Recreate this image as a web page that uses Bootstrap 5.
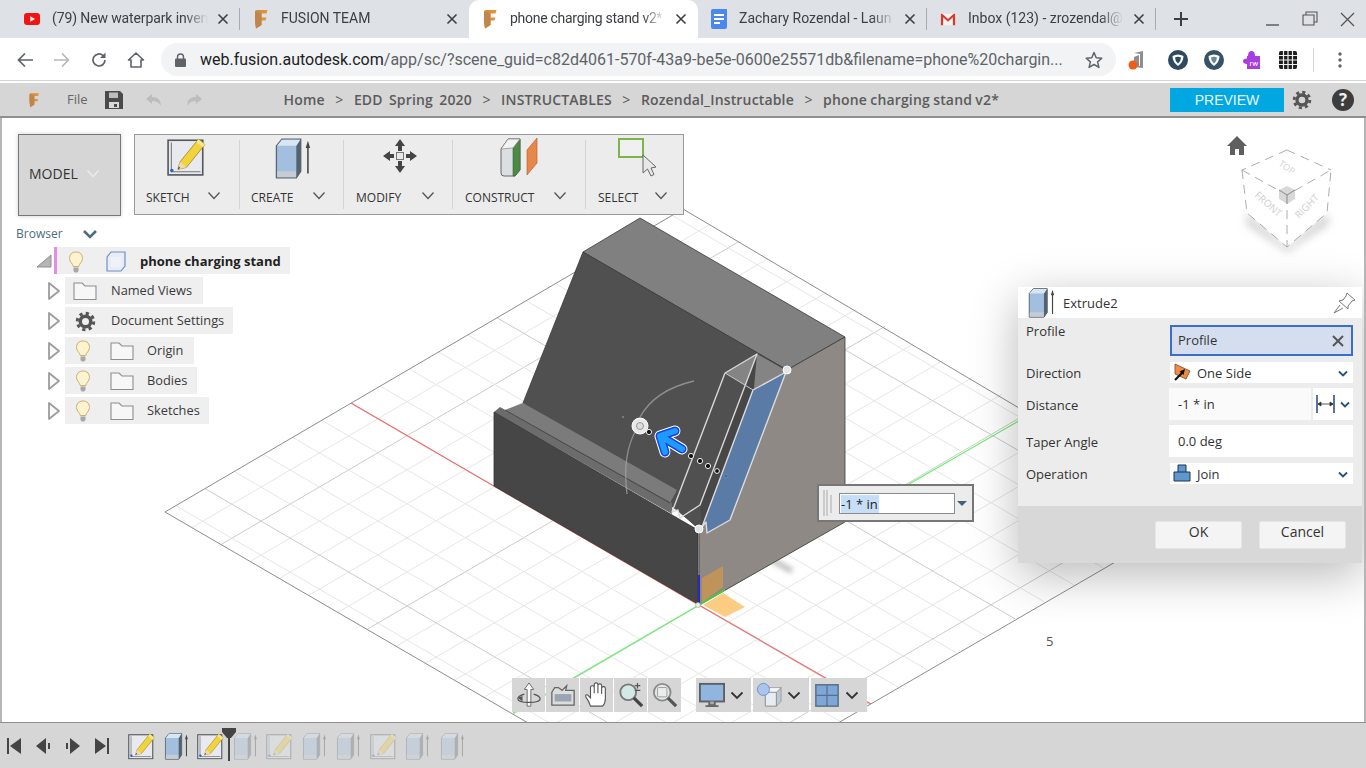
<!DOCTYPE html>
<html lang="en">
<head>
<meta charset="utf-8">
<title>phone charging stand v2*</title>
<link href="https://cdn.jsdelivr.net/npm/bootstrap@5.3.0/dist/css/bootstrap.min.css" rel="stylesheet">
<style>
html,body{height:768px;overflow:hidden;background:#fff}
body{font-family:"Open Sans","Liberation Sans",sans-serif;font-size:13px;color:#3c3c3c;width:1366px}
.chrome-font{font-family:Roboto,"Liberation Sans",sans-serif}
.tabstrip{height:38px;background:#dee1e6;padding-left:11px;font-size:14px;color:#3c4043}
.tabitem{width:229px;height:38px;padding:0 11px 1px 13px;position:relative}
.tabitem.is-active{background:#fff;border-radius:10px 10px 0 0}
.tabitem.has-sep::after{content:"";position:absolute;right:0;top:8px;height:22px;width:1px;background:#a8abb0}
.tabicon{width:16px;height:16px;flex:none;margin-right:12px}
.tabicon.favmark{height:20px}
.tabtext{flex:1 1 0;white-space:nowrap;overflow:hidden;-webkit-mask-image:linear-gradient(90deg,#000 85%,transparent);mask-image:linear-gradient(90deg,#000 85%,transparent)}
.tighttext{letter-spacing:-.28px}
.tightless{letter-spacing:-.12px}
.tabx{width:12px;height:12px;flex:none;margin-left:9px}
.winbtns{margin-left:auto}
.addrbar{height:43px;background:#fff;border-bottom:1px solid #d4d4d4;padding:1px 0 0 16px}
.navico{width:18px;height:18px;flex:none;margin-right:19px}
.omnibox{width:955px;height:33px;background:#f1f3f4;border-radius:17px;padding:0 13px 0 14px;margin-left:-3px;font-size:16px;color:#5f6368;white-space:nowrap}
.omnibox b{font-weight:400;color:#202124}
.urltext{flex:1 1 0;overflow:hidden;margin-left:14px}
.extico{width:20px;height:20px;flex:none}
.appbar{height:35px;margin-top:2px;background:#d6d6d6;border-bottom:2px solid #8f8f8f;padding-left:28px;color:#5c5c5c;position:relative}
.crumbs{font-weight:600;font-size:14px;color:#5b5b5b;margin-left:81px;white-space:nowrap;letter-spacing:.16px;word-spacing:-.5px}
.crumbs span{margin:0 10.5px;font-weight:400}
.crumbs .widewords{margin:0;font-weight:600;word-spacing:2.500px}
.previewbtn{width:114px;height:24px;border-radius:0;border:0;background:#00a7e1;color:#e8f6fc;font-size:14px;padding:0;line-height:24px;margin-left:auto;margin-top:1px;font-family:"Liberation Sans",sans-serif}
.canvasarea{position:relative;width:1366px;height:604px;border-left:2px solid #b5b5b5;border-right:2px solid #b5b5b5;overflow:hidden;background:#fff}
.scene{position:absolute;left:-2px;top:0;width:1366px;height:604px}
.modelbtn{position:absolute;left:16px;top:16px;width:103px;height:82px;background:#d6d6d6;border:1px solid #777;box-shadow:0 0 4px rgba(0,0,0,.2);font-size:14px;color:#333;padding:0 0 4px 10px}
.toolbarbox{position:absolute;left:132px;top:16px;height:81px;background:#ececec;border:1px solid #9a9a9a;color:#333;font-size:12px}
.toolitem{height:79px;padding:2px 0 0 11px;position:relative}
.toolitem+.toolitem::before{content:"";position:absolute;left:-1px;top:5px;bottom:5px;width:1px;background:#d4d4d4}
.toolicon{height:42px;width:42px;display:block}
.toollabel{margin-top:14px;line-height:16px;white-space:nowrap}
.chev-sm{width:14px;height:9px;position:absolute;top:56px}
.browserhead{position:absolute;left:14px;top:107px;font-size:12px;color:#4d6c82}
.treebox{position:absolute;left:-2px;top:129px;gap:3px;font-size:12.8px}
.treerow{height:27px}
.treeslot{width:65px;flex:none;padding-left:47px}
.treeslot.rootslot{width:54px;padding-left:36px}
.treepill{height:27px;background:#efefef;color:#3a3a3a;white-space:nowrap;padding-top:1px}
.rootpill{border-left:3px solid #e18fe0;font-weight:700;color:#222;width:236px;padding-left:9px;padding-top:2px}
.tico{width:20px;height:24px;flex:none}
.fico{width:24px;height:20px;flex:none}
.dialogbox{position:absolute;left:1016px;top:169px;width:344px;background:#ececec;box-shadow:0 12px 44px rgba(0,0,0,.28);font-size:13px;color:#333}
.dlghead{height:31px;background:#fff;padding:2px 0 0 9px}
.dlgbody{height:188px;position:relative}
.dlgrow{position:absolute;left:8px;width:327px}
.dlglabel{width:144px;flex:none}
.dlglabel.lower1{padding-top:2px}
.dlglabel.lower2{padding-top:4px;height:32px;width:143px}
.fieldbox{background:#fff;height:21px;padding:2px 5px 0 3px}
.inputbox{height:32px;padding:2px 0 0 9px}
.selchev{width:10px;height:7px;margin-left:auto}
.dlgfoot{height:57px;background:#d8d8d8;padding:15px 16px 0 137px;gap:17px}
.dlgbtn{width:87px;height:28px;padding:0 0 6px;border:1px solid #e6e6e6;border-radius:2px;background:#f4f4f4;font-size:14px;color:#333;line-height:20px}
.floatinput{position:absolute;left:815px;top:366px;width:157px;height:38px;background:#ececec;border:2px solid #777;padding:0 0 0 20px}
.floatfield{width:116px;height:21px;border:1px solid #8b8b8b;background:#fff;padding-left:1px;font-size:13px;line-height:20px;color:#222}
.floatfield span{background:#c6def6;padding-right:1px}
.navstrip{position:absolute;left:510px;top:560px;height:34px;gap:1px}
.navcell{height:34px;background:#d6d6d6;width:33px}
.navcell.wide{width:56px;padding-left:3px;margin-left:1px}
.navcell.spacer{margin-left:14px;width:55px}
.navcell svg.big{width:26px;height:26px;flex:none}
.chevdark{width:14px;height:9px;margin-left:5px;flex:none}
.scale5{position:absolute;left:1044px;top:514px;font-size:13px;color:#555}
.timeline{height:46px;background:#d6d6d6;border-top:1px solid #8f8f8f;padding-left:7px;position:relative}
.tlctrl{width:15px;height:18px;flex:none;margin-right:14px}
.tlitem{width:27px;height:28px;flex:none;margin-right:7.5px}
.tlghost{opacity:.32}
.tlmarker{position:absolute;left:222px;top:5px;width:14px;height:33px}
.first-tl{margin-left:5px}
</style>
</head>
<body class="d-flex flex-column">
<svg width="0" height="0" class="position-absolute">
<defs>
<linearGradient id="fg" x1="0" y1="0" x2="1" y2="0"><stop offset="0" stop-color="#c98a4a"/><stop offset="1" stop-color="#ea9438"/></linearGradient>
<symbol id="fav" viewBox="0 0 16 20"><path d="M2 2.500Q2 1 4 1H14.500L13.500 4.500H8.500V8.500H13.500L12.500 11.500H8.500V16L3 19.500Q2 14 2 10Z" fill="url(#fg)"/><path d="M2 2.500L8.500 4.500V16L3 19.500Q2 14 2 10Z" fill="#c08548"/></symbol>
<symbol id="x" viewBox="0 0 12 12"><path d="M1.500 1.500L10.500 10.500M10.500 1.500L1.500 10.500" stroke="#3c4043" stroke-width="1.600" fill="none"/></symbol>
<symbol id="chev" viewBox="0 0 14 9"><path d="M1.500 1.500L7 7.500L12.500 1.500" fill="none" stroke="#555" stroke-width="1.300"/></symbol>
<symbol id="chevb" viewBox="0 0 14 9"><path d="M1.500 1.500L7 7L12.500 1.500" fill="none" stroke="#333" stroke-width="1.800"/></symbol>
<symbol id="chevblue" viewBox="0 0 10 7"><path d="M1 1.500L5 5.500L9 1.500" fill="none" stroke="#24527e" stroke-width="1.800"/></symbol>
<symbol id="extrude" viewBox="0 0 34 38">
<path d="M2 8L7 2H24V31L20 37H2Z" fill="#a2bfe0" stroke="#5b6672" stroke-width="1.200"/>
<path d="M2.600 31H20V36.500H2.600Z" fill="#c6ccd3"/><path d="M20 8L24 2V31L20 37Z" fill="#55616d"/><path d="M2.600 8L7 2.500H23.500L20 8Z" fill="#d8e5f3"/>
<path d="M30.500 9V33" stroke="#444" stroke-width="1.400"/><path d="M30.500 3.500L28.500 10H32.500Z" fill="#444"/></symbol>
<symbol id="sketch" viewBox="0 0 36 36">
<rect x="1" y="3" width="32" height="32" fill="#e8eaef" stroke="#55595e" stroke-width="1.500"/>
<path d="M4 5V32H31" fill="none" stroke="#777" stroke-width="1"/><circle cx="4.500" cy="31" r="1.600" fill="#2a62d8"/>
<path d="M12 23L29 2L35 7L18 28L10 30Z" fill="#f3d33c" stroke="#9c8a2a" stroke-width=".8"/><path d="M12 23L18 28L10 30Z" fill="#ecd9b4"/><path d="M10 30L12 28.500L11 27Z" fill="#333"/><path d="M29 2L35 7L33 9.500L27 4.500Z" fill="#f7e88c"/></symbol>
<symbol id="bulb" viewBox="0 0 20 24"><path d="M10 2C5.500 2 3.500 5 3.500 8.500C3.500 12 6.800 13.500 7.300 16.500H12.700C13.200 13.500 16.500 12 16.500 8.500C16.500 5 14.500 2 10 2Z" fill="#fdf3cf" stroke="#d1ac70" stroke-width="1"/><path d="M7.500 17.500H12.500V21L11.200 22.500H8.800L7.500 21Z" fill="#a8a8a8"/></symbol>
<symbol id="folder" viewBox="0 0 24 20"><path d="M1 18.500V2H9L12 5H23V18.500Z" fill="#f7f7f7" stroke="#8e8e8e" stroke-width="1.100"/></symbol>
<symbol id="gear" viewBox="0 0 24 24"><circle cx="12" cy="12" r="6" fill="none" stroke="#555" stroke-width="4"/><circle cx="12" cy="12" r="9.400" fill="none" stroke="#555" stroke-width="3.400" stroke-dasharray="3.700 3.680"/></symbol>
<symbol id="tri" viewBox="0 0 14 20"><path d="M2 2L12 10L2 18Z" fill="#fafafa" stroke="#9c9c9c" stroke-width="1.800" stroke-linejoin="round"/></symbol>
</defs>
</svg>

<!-- browser tabs -->
<div class="tabstrip chrome-font d-flex flex-shrink-0">
  <div class="tabitem has-sep d-flex align-items-center">
    <svg class="tabicon" viewBox="0 0 16 16"><rect y="2" width="16" height="12" rx="3" fill="#f01414"/><path d="M6.300 5.300V10.700L11 8Z" fill="#fff"/></svg>
    <span class="tabtext tightless">(79) New waterpark inven</span><svg class="tabx"><use href="#x"/></svg></div>
  <div class="tabitem d-flex align-items-center">
    <svg class="tabicon favmark" viewBox="0 0 16 20"><use href="#fav"/></svg>
    <span class="tabtext">FUSION TEAM</span><svg class="tabx"><use href="#x"/></svg></div>
  <div class="tabitem is-active d-flex align-items-center">
    <svg class="tabicon favmark" viewBox="0 0 16 20"><use href="#fav"/></svg>
    <span class="tabtext tighttext">phone charging stand v2*</span><svg class="tabx"><use href="#x"/></svg></div>
  <div class="tabitem has-sep d-flex align-items-center">
    <svg class="tabicon favmark" viewBox="0 0 16 20"><path d="M0 2Q0 0 2 0H16V18Q16 20 14 20H2Q0 20 0 18Z" fill="#4a87ee"/><path d="M3 6H13M3 10H13M3 14H9" stroke="#fff" stroke-width="1.800"/></svg>
    <span class="tabtext">Zachary Rozendal - Laun</span><svg class="tabx"><use href="#x"/></svg></div>
  <div class="tabitem has-sep d-flex align-items-center">
    <svg class="tabicon" viewBox="0 0 18 16"><rect x="1" y="2" width="16" height="13" fill="#f2f2f2"/><path d="M1 15V2H2.500L9 8L15.500 2H17V15H14.500V6L9 11L3.500 6V15Z" fill="#d9382c"/></svg>
    <span class="tabtext">Inbox (123) - zrozendal@</span><svg class="tabx"><use href="#x"/></svg></div>
  <svg class="ms-3 align-self-center" width="18" height="18" viewBox="0 0 18 18"><path d="M9 2V16M2 9H16" stroke="#3c4043" stroke-width="2"/></svg>
  <svg class="winbtns align-self-center" width="92" height="18" viewBox="0 0 92 18"><path d="M0 15H13" stroke="#555" stroke-width="1.400"/><path d="M37 5H48V15H37Z M40 5V2H51V12H48" fill="none" stroke="#555" stroke-width="1.100"/><path d="M75 3L88 16M88 3L75 16" stroke="#555" stroke-width="1.300"/></svg><div style="width:8px"></div>
</div>

<!-- address bar -->
<div class="addrbar chrome-font d-flex align-items-center flex-shrink-0">
  <svg class="navico" viewBox="0 0 18 18"><path d="M17 9H3M9 2.500L2.500 9L9 15.500" fill="none" stroke="#5f6368" stroke-width="1.700"/></svg>
  <svg class="navico" viewBox="0 0 18 18"><path d="M1 9H15M9 2.500L15.500 9L9 15.500" fill="none" stroke="#b6b8bb" stroke-width="1.700"/></svg>
  <svg class="navico" viewBox="0 0 18 18"><path d="M15 9A6 6 0 1 1 13 4.500" fill="none" stroke="#5f6368" stroke-width="1.700"/><path d="M15.500 1.500V7H10Z" fill="#5f6368"/></svg>
  <svg class="navico" viewBox="0 0 18 18"><path d="M9 2L1.500 9H4V16H14V9H16.500Z" fill="none" stroke="#5f6368" stroke-width="1.600" stroke-linejoin="round"/></svg>
  <div class="omnibox d-flex align-items-center">
    <svg width="11" height="14" viewBox="0 0 11 14" class="flex-shrink-0"><path d="M2.500 6V4A3 3 0 0 1 8.500 4V6" fill="none" stroke="#5f6368" stroke-width="1.400"/><rect y="5.500" width="11" height="8.500" rx="1" fill="#5f6368"/></svg>
    <span class="urltext"><b>web.fusion.autodesk.com</b>/app/sc/?scene_guid=c82d4061-570f-43a9-be5e-0600e25571db&amp;filename=phone%20chargin...</span>
    <svg width="18" height="18" viewBox="0 0 18 18" class="ms-2 flex-shrink-0"><path d="M9 1.500L11.200 6.700L16.800 7.200L12.600 10.900L13.900 16.400L9 13.500L4.100 16.400L5.400 10.900L1.200 7.200L6.800 6.700Z" fill="none" stroke="#5f6368" stroke-width="1.500" stroke-linejoin="round"/></svg>
  </div>
  <svg class="extico" style="margin-left:11px" viewBox="0 0 20 20"><path d="M7 3L16 1V18L7 17V7L12 5V16L13 16V4Z" fill="#8e8e8e"/><circle cx="6" cy="15" r="4.500" fill="#f25a18"/></svg>
  <svg class="extico" style="margin-left:21px" viewBox="0 0 20 20"><circle cx="10" cy="10" r="10" fill="#2e4a60"/><path d="M4.500 6Q10 3 15.500 6Q15.500 12 10 16Q4.500 12 4.500 6Z" fill="#fff"/><path d="M7 7.500Q10 6 13 7.500Q13 11 10 13.500Q7 11 7 7.500Z" fill="#2e4a60"/></svg>
  <svg class="extico" style="margin-left:16px" viewBox="0 0 20 20"><circle cx="10" cy="10" r="10" fill="#365268"/><path d="M4.500 6Q10 3 15.500 6Q15.500 12 10 16Q4.500 12 4.500 6Z" fill="#fff"/><path d="M7 7.500Q10 6 13 7.500Q13 11 10 13.500Q7 11 7 7.500Z" fill="#6f8797"/></svg>
  <svg class="extico" style="margin-left:18px" viewBox="0 0 20 20"><path d="M1 6H6Q6 1 9.500 1Q13 1 13 6H18V19H5V14Q1 14 1 11Q1 8.500 5 8.500V6Z" fill="#a83de0"/><text x="7.500" y="15.500" font-size="8" fill="#fff" font-family="Roboto">rw</text></svg>
  <svg class="extico" style="margin-left:16px" viewBox="0 0 20 20"><rect x="1" y="1" width="18" height="18" rx="2" fill="#1c1c1c"/><path d="M1 5.500H19M1 10H19M1 14.500H19M5.500 1V19M10 1V19M14.500 1V19" stroke="#f0f0f0" stroke-width="1.200"/></svg>
  <div style="width:1px;height:24px;background:#d4d4d4;margin-left:15px"></div>
  <svg width="4" height="16" viewBox="0 0 4 16" style="margin-left:24px"><circle cx="2" cy="2" r="1.700" fill="#5f6368"/><circle cx="2" cy="8" r="1.700" fill="#5f6368"/><circle cx="2" cy="14" r="1.700" fill="#5f6368"/></svg>
</div>

<!-- app bar -->
<div class="appbar d-flex align-items-center flex-shrink-0">
  <svg width="12" height="16" viewBox="0 0 16 20"><use href="#fav"/></svg>
  <span style="margin-left:27px;color:#666;font-size:13px">File</span>
  <svg class="ms-3" width="20" height="20" viewBox="0 0 20 20" style="flex:none"><path d="M1 1H16L19 4V19H1Z" fill="#4a4a4a"/><rect x="5" y="2.500" width="9" height="5.500" fill="#bdbdbd"/><rect x="5" y="12" width="10" height="6" fill="#d8d8d8"/><rect x="10" y="14" width="3" height="3" fill="#4a4a4a"/></svg>
  <svg width="18" height="14" viewBox="0 0 18 14" style="margin-left:21px;flex:none"><path d="M7 1L1 6L7 11V8Q13 8 16 13Q16 4 7 4Z" fill="#bdbdbd"/></svg>
  <svg width="18" height="14" viewBox="0 0 18 14" style="margin-left:22px;flex:none"><path d="M11 1L17 6L11 11V8Q5 8 2 13Q2 4 11 4Z" fill="#bdbdbd"/></svg>
  <div class="crumbs">Home<span>&gt;</span><span class="widewords">EDD Spring 2020</span><span>&gt;</span>INSTRUCTABLES<span>&gt;</span>Rozendal_Instructable<span>&gt;</span>phone charging stand v2*</div>
  <button class="btn previewbtn flex-shrink-0" type="button">PREVIEW</button>
  <svg width="20" height="20" viewBox="0 0 24 24" style="margin-left:8px;flex:none"><use href="#gear"/></svg>
  <div class="d-flex align-items-center justify-content-center flex-shrink-0" style="width:22px;height:22px;border-radius:50%;background:#3d3d3d;color:#eee;font-weight:700;font-size:17px;margin:0 12px 0 20px;line-height:22px">?</div>
</div>

<!-- 3D canvas -->
<div class="canvasarea flex-shrink-0">
  <svg class="scene" viewBox="0 118 1366 604" id="scene">
    <defs>
      <filter id="soft" x="-50%" y="-50%" width="200%" height="200%"><feGaussianBlur stdDeviation="4"/></filter>
      <filter id="softer" x="-50%" y="-50%" width="200%" height="200%"><feGaussianBlur stdDeviation="2.500"/></filter>
    </defs>
    <g id="gridlines"></g>
    <path d="M165 512L683 209L1198 514L683 813Z" fill="none" stroke="#8d8d8d" stroke-width="1"/>
    <path d="M351 403L699 605L871 704" stroke="#f26a6a" stroke-width="1.100" fill="none"/>
    <path d="M513 713L699 605L1029 415" stroke="#6cee6c" stroke-width="1.200" fill="none"/>
    <path d="M772 560L792 571" stroke="#c4c4c4" stroke-width="6" filter="url(#softer)"/>
    <!-- body -->
    <path d="M640 218L845 337L787 370L583 252Z" fill="#808080" stroke="#3a3a3a" stroke-width=".8"/>
    <path d="M583 252L787 370L699 529L677 510L523 403Z" fill="#505050" stroke="#3a3a3a" stroke-width=".8"/>
    <path d="M845 337V522L699 605V530L787 370Z" fill="#8e8985" stroke="#3a3a3a" stroke-width=".8"/>
    <path d="M505 410L523 403L677 490L670 503Z" fill="#7b7b7b"/>
    <path d="M494 412L500 407L672 503L672 514Z" fill="#6c6c6c"/>
    <path d="M505 410L670 503" stroke="#3c3c3c" stroke-width=".8"/>
    <path d="M494 412L698 530V604L494 486Z" fill="#464646" stroke="#333" stroke-width=".8"/>
    <!-- extrude preview -->
    <path d="M725 373L753 390L787 371L757 354Z" fill="#848484"/>
    <path d="M754 388L757 354L700 505L702 527Z" fill="#474747"/>
    <path d="M753 390L786 372L730 520L707 533L706 522L702 527Z" fill="#5a7ba6" stroke="#dcdcdc" stroke-width="1.400" stroke-linejoin="round"/>
    <path d="M725 373L672 512L678 510L680 518L700 505L757 354Z" fill="none" stroke="#d8d8d8" stroke-width="1.400" stroke-linejoin="round"/>
    <path d="M725 373L753 390" fill="none" stroke="#c8c8c8" stroke-width="1"/>
    <path d="M694 381Q655 390 640 417" fill="none" stroke="#a9a9a9" stroke-width="1.300" opacity=".7"/>
    <path d="M636 430Q622 455 627 494" fill="none" stroke="#a9a9a9" stroke-width="1.300" opacity=".7"/>
    <circle cx="623" cy="417" r="1" fill="#888"/>
    <circle cx="640" cy="426" r="8" fill="#e8e8e8" stroke="#fff" stroke-width="1"/><circle cx="640" cy="426" r="3.500" fill="#ddd" stroke="#999"/>
    <g fill="#111" stroke="#eee" stroke-width="1"><circle cx="649" cy="432" r="2.600"/><circle cx="691" cy="456" r="2.600"/><circle cx="700" cy="461" r="2.600"/><circle cx="708" cy="466" r="2.600"/><circle cx="717" cy="471" r="2.400"/></g>
    <circle cx="726" cy="476" r="2" fill="#4f6b90" stroke="#7a96bb" stroke-width=".6"/>
    <g fill="none" stroke-linecap="round" stroke-linejoin="round">
      <path d="M675 431L660 436L665 452M662 437L682 449" stroke="#fff" stroke-width="11"/>
      <path d="M675 431L660 436L665 452M662 437L682 449" stroke="#1240e6" stroke-width="9"/>
      <path d="M675 431L660 436L665 452M662 437L682 449" stroke="#1f9aff" stroke-width="6"/>
    </g>
    <circle cx="787" cy="370" r="4" fill="#e2e6ea" stroke="#fff"/><circle cx="699" cy="529" r="4" fill="#e2e6ea" stroke="#fff"/>
    <!-- origin -->
    <path d="M702 578L723 566V587L702 603Z" fill="#f0a030" fill-opacity=".5"/>
    <path d="M703 605L723 593L745 607L725 617Z" fill="#fbb040" fill-opacity=".65"/>
    <path d="M699 575V605" stroke="#1010e0" stroke-width="1.500"/><path d="M699 605L725 590" stroke="#40d040" stroke-width="1.500"/>
    <circle cx="698" cy="605" r="2.500" fill="#eee" stroke="#999" stroke-width=".6"/>
    <!-- view cube -->
    <g>
      <path d="M1247 213L1287 247L1327 213L1329 224L1287 252L1246 224Z" fill="#d0d0d0" filter="url(#soft)"/>
      <path d="M1287 150L1331 170L1327 213L1287 247L1247 213L1242 170Z" fill="#fff"/>
      <path d="M1287 150L1331 170M1287 150L1242 170M1242 170L1247 213L1287 247L1327 213L1331 170M1242 170L1287 195L1331 170M1287 195V247" fill="none" stroke="#979797" stroke-width=".8" stroke-dasharray="9 6"/>
      <path d="M1287 186L1295 190V199L1287 204L1279 199V190Z" fill="#d8d8d8"/><path d="M1279 190L1287 195L1295 190M1287 195V204" fill="none" stroke="#777" stroke-width=".8"/>
      <text transform="translate(1278 165) rotate(35)" font-size="9" fill="#d2d2d2" font-family="Open Sans">TOP</text>
      <text transform="translate(1254 196) rotate(42)" font-size="10" fill="#cfcfcf" font-family="Open Sans">FRONT</text>
      <text transform="translate(1299 219) rotate(-45)" font-size="10" fill="#cfcfcf" font-family="Open Sans">RIGHT</text>
      <path d="M1237 136L1227 146H1230V155H1235V149H1239V155H1244V146H1247Z" fill="#5f5f5f"/>
    </g>
  </svg>

  <div class="modelbtn d-flex align-items-center">MODEL
    <svg class="ms-2" width="14" height="9" viewBox="0 0 14 9"><path d="M1.500 1.500L7 7.500L12.500 1.500" fill="none" stroke="#ececec" stroke-width="1.300"/></svg></div>

  <div class="toolbarbox d-flex">
    <div class="toolitem" style="width:105px">
      <svg class="toolicon" viewBox="0 0 36 36" style="margin-left:21px;height:39px;width:39px"><use href="#sketch"/></svg>
      <div class="toollabel">SKETCH</div><svg class="chev-sm" style="left:72px"><use href="#chev"/></svg></div>
    <div class="toolitem" style="width:104px">
      <svg class="toolicon" viewBox="0 0 34 38" style="margin-left:21px"><use href="#extrude"/></svg>
      <div class="toollabel" style="margin-top:11px">CREATE</div><svg class="chev-sm" style="left:72px"><use href="#chev"/></svg></div>
    <div class="toolitem" style="width:109px;padding-left:12px">
      <svg class="toolicon" viewBox="0 0 36 36" style="margin-left:26px;width:36px;height:38px"><path d="M18 1L23 8H20V13H16V8H13ZM18 35L23 28H20V23H16V28H13ZM1 18L8 13V16H12V20H8V23ZM35 18L28 13V16H24V20H28V23Z" fill="#444"/><rect x="14.500" y="14.500" width="7" height="7" fill="#e8e8e8" stroke="#777"/></svg>
      <div class="toollabel" style="margin-top:15px">MODIFY</div><svg class="chev-sm" style="left:77px"><use href="#chev"/></svg></div>
    <div class="toolitem" style="width:133px;padding-left:12px">
      <svg class="toolicon" viewBox="0 0 38 40" style="margin-left:35px;width:38px;height:40px"><path d="M1 12L8 2H20V33L15 39H4Q1 39 1 36Z" fill="#dcdfe2" stroke="#666"/><path d="M13 11L20 2V33L15 39H13Z" fill="#4d8a46" stroke="#39682f" stroke-width=".6"/><path d="M1 12L8 2H20L13 11Z" fill="#f2f2f2" stroke="#777" stroke-width=".6"/><path d="M27 13L37 1V26L27 38Z" fill="#e8874a" stroke="#a65a26" stroke-width=".6"/></svg>
      <div class="toollabel" style="margin-top:13px">CONSTRUCT</div><svg class="chev-sm" style="left:100px"><use href="#chev"/></svg></div>
    <div class="toolitem" style="width:97px;padding-left:12px">
      <svg class="toolicon" viewBox="0 0 38 40" style="margin-left:20px;width:38px;height:40px"><rect x="1" y="2" width="24" height="18" fill="#f0f0f0" stroke="#7db54a" stroke-width="2"/><path d="M25 18V36L29.500 32L33 39L36 37.500L33 31L38 30Z" fill="#e8e8e8" stroke="#666"/></svg>
      <div class="toollabel" style="margin-top:13px">SELECT</div><svg class="chev-sm" style="left:68px"><use href="#chev"/></svg></div>
  </div>

  <div class="browserhead d-flex align-items-center">Browser
    <svg width="16" height="10" viewBox="0 0 16 10" style="margin-left:19px"><path d="M2 2L8 8L14 2" fill="none" stroke="#4d6c82" stroke-width="2.600"/></svg></div>

  <div class="treebox d-flex flex-column">
    <div class="treerow d-flex">
      <div class="treeslot rootslot d-flex align-items-center"><svg width="16" height="14" viewBox="0 0 16 14"><path d="M15 1V13H1Z" fill="#b5b5b5" stroke="#909090"/></svg></div>
      <div class="treepill rootpill d-flex align-items-center" style="font-size:13px"><svg class="tico"><use href="#bulb"/></svg>
        <svg width="22" height="22" viewBox="0 0 22 22" style="margin-left:19px;flex:none"><path d="M2 6L6 1H20V15L16 20H2Z" fill="#e8ecf5" stroke="#6f8fc4" stroke-width="1.200"/><path d="M6 6H16V16H6Z" fill="#f4f6fa" opacity=".6"/></svg>
        <span style="margin-left:13px">phone charging stand</span></div></div>
    <div class="treerow d-flex">
      <div class="treeslot d-flex align-items-center"><svg width="14" height="20"><use href="#tri"/></svg></div>
      <div class="treepill d-flex align-items-center" style="width:138px;padding-left:8px"><svg class="fico"><use href="#folder"/></svg><span style="margin-left:14px">Named Views</span></div></div>
    <div class="treerow d-flex">
      <div class="treeslot d-flex align-items-center"><svg width="14" height="20"><use href="#tri"/></svg></div>
      <div class="treepill d-flex align-items-center" style="width:168px;padding-left:10px"><svg width="21" height="21" viewBox="0 0 24 24" style="flex:none"><use href="#gear"/></svg><span style="margin-left:15px">Document Settings</span></div></div>
    <div class="treerow d-flex">
      <div class="treeslot d-flex align-items-center"><svg width="14" height="20"><use href="#tri"/></svg></div>
      <div class="treepill d-flex align-items-center" style="width:129px;padding-left:8px"><svg class="tico"><use href="#bulb"/></svg><svg class="fico" style="margin-left:17px"><use href="#folder"/></svg><span style="margin-left:13px">Origin</span></div></div>
    <div class="treerow d-flex">
      <div class="treeslot d-flex align-items-center"><svg width="14" height="20"><use href="#tri"/></svg></div>
      <div class="treepill d-flex align-items-center" style="width:132px;padding-left:8px"><svg class="tico"><use href="#bulb"/></svg><svg class="fico" style="margin-left:17px"><use href="#folder"/></svg><span style="margin-left:13px">Bodies</span></div></div>
    <div class="treerow d-flex">
      <div class="treeslot d-flex align-items-center"><svg width="14" height="20"><use href="#tri"/></svg></div>
      <div class="treepill d-flex align-items-center" style="width:144px;padding-left:8px"><svg class="tico"><use href="#bulb"/></svg><svg class="fico" style="margin-left:17px"><use href="#folder"/></svg><span style="margin-left:13px">Sketches</span></div></div>
  </div>

  <div class="floatinput d-flex align-items-center">
    <svg width="10" height="28" viewBox="0 0 10 28" style="position:absolute;left:4px;top:3px"><path d="M1 1V27M4 1V27M8 6V24" stroke="#aaa" stroke-width="1"/></svg>
    <div class="floatfield"><span>-1 * in</span></div>
    <svg width="12" height="7" viewBox="0 0 12 7" style="margin-left:1px"><path d="M1 1H11L6 6Z" fill="#43607a"/></svg>
  </div>

  <div class="scale5">5</div>

  <div class="dialogbox">
    <div class="dlghead d-flex align-items-center">
      <svg width="29" height="31" viewBox="0 0 34 38" style="flex:none;margin-top:-2px"><use href="#extrude"/></svg>
      <span style="margin-left:7px">Extrude2</span>
      <svg class="ms-auto" width="24" height="24" viewBox="0 0 24 24" style="margin:-2px 5px 0 0"><path d="M14 2L22 9L19 10L15 15L15 18L6 10L10 9L13 5ZM7 14L1 22L10 17" fill="#fff" stroke="#777" stroke-width="1"/></svg>
    </div>
    <div class="dlgbody">
      <div class="dlgrow d-flex" style="top:4px"><div class="dlglabel">Profile</div>
        <div class="d-flex align-items-center flex-grow-1" style="height:31px;margin-top:3px;background:#d5deef;border:2px solid #3b6ec8;padding:0 6px 0 6px">Profile
          <svg class="ms-auto" width="14" height="14" viewBox="0 0 14 14"><path d="M2 2L12 12M12 2L2 12" stroke="#555" stroke-width="2"/></svg></div></div>
      <div class="dlgrow d-flex align-items-center" style="top:44px"><div class="dlglabel lower1">Direction</div>
        <div class="fieldbox d-flex align-items-center flex-grow-1"><svg width="18" height="18" viewBox="0 0 18 18" style="flex:none;margin-top:-3px"><path d="M2 1L17 8L13 16L2 11Z" fill="#ef8b45" stroke="#7a4a22" stroke-width=".8"/><path d="M2 17L10 9" stroke="#111" stroke-width="2.200"/><path d="M12 6L10.500 12L6.500 8.500Z" fill="#111"/></svg><span style="margin-left:6px">One Side</span>
          <svg class="selchev"><use href="#chevblue"/></svg></div></div>
      <div class="dlgrow d-flex" style="top:70px"><div class="dlglabel lower2 d-flex align-items-center">Distance</div>
        <div class="inputbox d-flex align-items-center" style="background:#fafafa;width:142px">-1 * in</div>
        <div class="d-flex align-items-center" style="background:#fff;height:32px;width:40px;margin-left:2px;padding-left:3px"><svg width="20" height="20" viewBox="0 0 20 20"><path d="M1 1V19M18 1V19" stroke="#25467a" stroke-width="1.500"/><path d="M2 10H17M2 10L5 8V12ZM17 10L14 8V12Z" stroke="#333" stroke-width=".8" fill="#333"/></svg><svg width="10" height="7" class="ms-1"><use href="#chevblue"/></svg></div></div>
      <div class="dlgrow d-flex" style="top:107px"><div class="dlglabel lower2 d-flex align-items-center">Taper Angle</div>
        <div class="inputbox d-flex align-items-center flex-grow-1" style="background:#fff">0.0 deg</div></div>
      <div class="dlgrow d-flex align-items-center" style="top:145px"><div class="dlglabel lower1">Operation</div>
        <div class="fieldbox d-flex align-items-center flex-grow-1"><svg width="18" height="18" viewBox="0 0 18 18" style="flex:none;margin-top:-3px"><path d="M5 1H13V8H17V17H1V8H5Z" fill="#5f97cf" stroke="#1f3552"/><path d="M5 8H13" stroke="#1f3552"/></svg><span style="margin-left:6px">Join</span>
          <svg class="selchev"><use href="#chevblue"/></svg></div></div>
    </div>
    <div class="dlgfoot d-flex">
      <button class="btn dlgbtn" type="button">OK</button>
      <button class="btn dlgbtn" type="button">Cancel</button>
    </div>
  </div>

  <div class="navstrip d-flex">
    <div class="navcell d-flex align-items-center justify-content-center"><svg class="big" viewBox="0 0 28 28"><path d="M14 1L19 8H16V26H12V8H9Z" fill="#fff" stroke="#666"/><path d="M9 13Q2 15 2 18Q2 22 14 22Q26 22 26 18Q26 15 19 13" fill="none" stroke="#555" stroke-width="1.300"/><path d="M2 17L7 15V21Z" fill="#555"/></svg></div>
    <div class="navcell d-flex align-items-center justify-content-center"><svg class="big" viewBox="0 0 28 28"><path d="M2 11L5 6H9L13 9L18 4L17 9H26V25H2Z" fill="#ddd" stroke="#666" stroke-width="1.400"/><rect x="5" y="13" width="18" height="8" fill="#9aa5b1"/></svg></div>
    <div class="navcell d-flex align-items-center justify-content-center"><svg class="big" viewBox="0 0 28 28"><path d="M7 26Q5 20 2 16Q1 13 4 14L7 17V6Q7 4 9 4T11 6V12V3Q11 1 13 1T15 3V12V4Q15 2 17 2T19 4V13V7Q19 5 21 5T23 7V18Q23 23 20 26Z" fill="#fff" stroke="#555" stroke-width="1.200"/></svg></div>
    <div class="navcell d-flex align-items-center justify-content-center"><svg class="big" viewBox="0 0 28 28"><circle cx="11" cy="11" r="8.500" fill="#d5e8e8" stroke="#777" stroke-width="2"/><path d="M17 17L26 26" stroke="#444" stroke-width="3.500"/><path d="M21 1V7M18 4H24M18 9H24" stroke="#555" stroke-width="1.300"/></svg></div>
    <div class="navcell d-flex align-items-center justify-content-center"><svg class="big" viewBox="0 0 28 28"><circle cx="11" cy="11" r="9" fill="#e4e8ea" stroke="#8a8a8a" stroke-width="2"/><rect x="6" y="6" width="10" height="10" rx="1" fill="#ececec" stroke="#999"/><path d="M17 17L26 26" stroke="#555" stroke-width="3.500"/></svg></div>
    <div class="navcell wide spacer d-flex align-items-center"><svg class="big" viewBox="0 0 28 28"><rect x="1" y="2" width="26" height="19" fill="#8fb5e0" stroke="#5f5f5f" stroke-width="2"/><path d="M11 21V25H17V21M7 26H21" stroke="#666" stroke-width="2" fill="#aaa"/></svg><svg class="chevdark"><use href="#chevb"/></svg></div>
    <div class="navcell wide d-flex align-items-center"><svg class="big" viewBox="0 0 28 28"><path d="M10 11H22V26H10Z" fill="#e6ecf1" stroke="#888"/><path d="M22 11L27 6V21L22 26Z" fill="#bfc7cf" stroke="#888" stroke-width=".7"/><path d="M10 11L14 6H27L22 11Z" fill="#f3f5f7" stroke="#888" stroke-width=".7"/><circle cx="8" cy="8" r="6.500" fill="#a9c5ee" stroke="#6f8fc4"/></svg><svg class="chevdark"><use href="#chevb"/></svg></div>
    <div class="navcell wide d-flex align-items-center"><svg class="big" viewBox="0 0 28 28"><rect x="2" y="3" width="24" height="23" fill="#7ea6d6" stroke="#5a6f88" stroke-width="1.600"/><path d="M14 3V26M2 14.500H26" stroke="#5a6f88" stroke-width="1.300"/></svg><svg class="chevdark"><use href="#chevb"/></svg></div>
  </div>
</div>

<!-- timeline -->
<div class="timeline d-flex align-items-center flex-shrink-0">
  <svg class="tlctrl" viewBox="0 0 15 18"><path d="M1 1V17" stroke="#444" stroke-width="2"/><path d="M14 1V17L3 9Z" fill="#444"/></svg>
  <svg class="tlctrl" viewBox="0 0 15 18"><path d="M10 1V17L0 9Z" fill="#444"/><rect x="12" y="6" width="2" height="6" fill="#444"/></svg>
  <svg class="tlctrl" viewBox="0 0 15 18"><path d="M5 1V17L15 9Z" fill="#444"/><rect x="1" y="6" width="2" height="6" fill="#444"/></svg>
  <svg class="tlctrl" viewBox="0 0 15 18"><path d="M14 1V17" stroke="#444" stroke-width="2"/><path d="M1 1V17L12 9Z" fill="#444"/></svg>
  <svg class="tlitem first-tl" viewBox="0 0 36 36"><use href="#sketch"/></svg>
  <svg class="tlitem" viewBox="0 0 34 38"><use href="#extrude"/></svg>
  <svg class="tlitem" viewBox="0 0 36 36"><use href="#sketch"/></svg>
  <svg class="tlitem tlghost" viewBox="0 0 34 38"><use href="#extrude"/></svg>
  <svg class="tlitem tlghost" viewBox="0 0 36 36"><use href="#sketch"/></svg>
  <svg class="tlitem tlghost" viewBox="0 0 34 38"><use href="#extrude"/></svg>
  <svg class="tlitem tlghost" viewBox="0 0 34 38"><use href="#extrude"/></svg>
  <svg class="tlitem tlghost" viewBox="0 0 36 36"><use href="#sketch"/></svg>
  <svg class="tlitem tlghost" viewBox="0 0 34 38"><use href="#extrude"/></svg>
  <svg class="tlitem tlghost" viewBox="0 0 34 38"><use href="#extrude"/></svg>
  <svg class="tlmarker" viewBox="0 0 14 33"><path d="M0 0H14V4L9 10H8V33H6V10H5L0 4Z" fill="#444"/></svg>
</div>

<script>
(function(){
  var g=document.getElementById('gridlines'),ns='http://www.w3.org/2000/svg';
  var L=[165,512],A=[518,301],B=[518,-303],step=29.2/518;
  function add(x1,y1,x2,y2,major){
    var l=document.createElementNS(ns,'line');
    l.setAttribute('x1',x1);l.setAttribute('y1',y1);l.setAttribute('x2',x2);l.setAttribute('y2',y2);
    l.setAttribute('stroke',major?'#cbcbcb':'#e6e6e6');l.setAttribute('stroke-width','1');g.appendChild(l);
  }
  var a0=348/518,b0=186/518,k,a,b;
  for(k=-30;k<30;k++){
    a=a0+k*step;
    if(a>0&&a<1)add(L[0]+a*A[0],L[1]+a*A[1],L[0]+a*A[0]+B[0],L[1]+a*A[1]+B[1],k%5===0);
    b=b0+k*step;
    if(b>0&&b<1)add(L[0]+b*B[0],L[1]+b*B[1],L[0]+b*B[0]+A[0],L[1]+b*B[1]+A[1],k%5===0);
  }
})();
</script>
<script src="https://cdn.jsdelivr.net/npm/bootstrap@5.3.0/dist/js/bootstrap.bundle.min.js"></script>
</body>
</html>
